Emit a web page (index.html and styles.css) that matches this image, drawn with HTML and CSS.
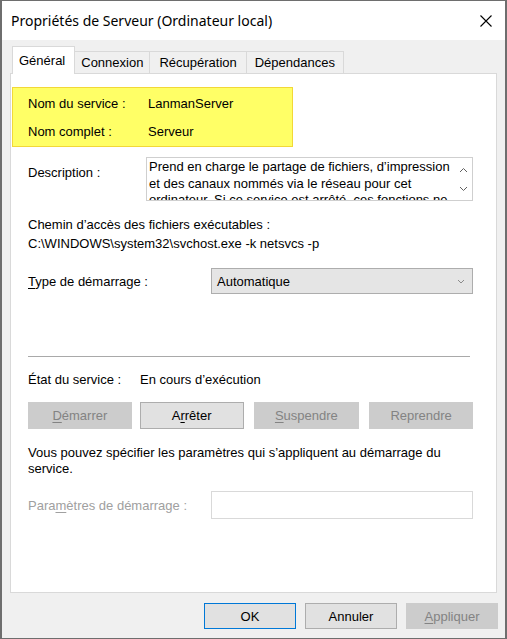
FILE: index.html
```html
<!DOCTYPE html>
<html lang="fr">
<head>
    <meta charset="UTF-8">
    <title>Propriétés de Serveur (Ordinateur local)</title>
    <link rel="stylesheet" href="styles.css">
</head>
<body>
    <div class="window">
        <div class="titlebar">
            <span class="title">Propriétés de Serveur (Ordinateur local)</span>
            <svg class="close" width="12" height="12" viewBox="0 0 12 12">
                <path d="M0.5 0.5 L11.5 11.5 M11.5 0.5 L0.5 11.5" stroke="#000" stroke-width="1.1" fill="none"/>
            </svg>
        </div>

        <div class="tabs">
            <div class="tab active">Général</div>
            <div class="tab">Connexion</div>
            <div class="tab">Récupération</div>
            <div class="tab">Dépendances</div>
        </div>

        <div class="panel">
            <!-- Names -->
            <div class="highlight">
                <div class="row">
                    <span class="label">Nom du service :</span>
                    <span>LanmanServer</span>
                </div>
                <div class="row">
                    <span class="label">Nom complet :</span>
                    <span>Serveur</span>
                </div>
            </div>

            <div class="desc-row">
                <span class="label desc-label">Description :</span>
                <div class="desc-box">
                    <div class="desc-text">Prend en charge le partage de fichiers, d’impression<br>et des canaux nommés via le réseau pour cet<br>ordinateur. Si ce service est arrêté, ces fonctions ne</div>
                    <div class="scroll">
                        <svg width="9" height="6" viewBox="0 0 9 6"><path d="M1 5 L4.5 1.5 L8 5" stroke="#606060" fill="none"/></svg>
                        <svg width="9" height="6" viewBox="0 0 9 6"><path d="M1 1 L4.5 4.5 L8 1" stroke="#606060" fill="none"/></svg>
                    </div>
                </div>
            </div>

            <div class="path">
                <div>Chemin d’accès des fichiers exécutables :</div>
                <div>C:\WINDOWS\system32\svchost.exe -k netsvcs -p</div>
            </div>

            <div class="field-row">
                <span class="label wide"><u>T</u>ype de démarrage :</span>
                <div class="select">
                    <span>Automatique</span>
                    <svg width="8" height="5" viewBox="0 0 8 5"><path d="M1 1 L4 4 L7 1" stroke="#8a8a8a" fill="none"/></svg>
                </div>
            </div>

            <div class="separator"></div>

            <div class="status">
                <span class="status-label">État du service :</span>
                <span>En cours d’exécution</span>
            </div>

            <div class="actions">
                <button class="btn disabled"><u>D</u>émarrer</button>
                <button class="btn">A<u>r</u>rêter</button>
                <button class="btn disabled"><u>S</u>uspendre</button>
                <button class="btn disabled">Reprendre</button>
            </div>

            <p class="hint">Vous pouvez spécifier les paramètres qui s’appliquent au démarrage du service.</p>

            <div class="field-row params">
                <span class="label wide muted">Para<u>m</u>ètres de démarrage :</span>
                <div class="input"></div>
            </div>
        </div>

        <div class="footer">
            <button class="btn default">OK</button>
            <button class="btn">Annuler</button>
            <button class="btn disabled"><u>A</u>ppliquer</button>
        </div>
    </div>
</body>
</html>
```

FILE: styles.css
```css
/* General */
* {
    margin: 0;
    padding: 0;
    box-sizing: border-box;
}

body {
    font-family: 'Liberation Sans', Arial, sans-serif;
    font-size: 13px;
    color: #000;
    background-color: #f0f0f0;
}

u {
    text-decoration: underline;
    text-underline-offset: 2px;
}

/* Window frame */
.window {
    width: 507px;
    height: 639px;
    background-color: #f0f0f0;
    border: 1px solid #6e6e6e;
    border-left-width: 2px;
    border-right-width: 2px;
}

.titlebar {
    height: 39px;
    background-color: #fff;
    display: flex;
    align-items: center;
    justify-content: space-between;
    padding: 0 13px 0 9px;
}

.title {
    font-family: 'Noto Sans', sans-serif;
    font-size: 14px;
    padding-bottom: 1px;
}

.close {
    display: block;
}

/* Tabs */
.tabs {
    display: flex;
    align-items: flex-end;
    height: 33px;
    margin-left: 10px;
    position: relative;
    z-index: 1;
}

.tab {
    height: 22px;
    line-height: 22px;
    padding: 0 6px;
    border: 1px solid #d9d9d9;
    border-bottom: none;
    border-left: none;
    background-color: #f0f0f0;
}

.tab:nth-child(3) {
    padding: 0 9px;
}

.tab:nth-child(4) {
    padding: 0 8px;
}

.tab.active {
    height: 28px;
    line-height: 27px;
    margin-bottom: -1px;
    padding: 0 9px 0 6px;
    background-color: #fff;
    border-left: 1px solid #d9d9d9;
}

/* Panel */
.panel {
    height: 520px;
    margin: 0 8px;
    background-color: #fff;
    border: 1px solid #d9d9d9;
    padding: 13px 23px 0 17px;
}

.highlight {
    width: 281px;
    margin-left: -16px;
    padding: 1px 0 1px 15px;
    background-color: #ffff66;
    border: 1px solid #f2d838;
}

.row {
    display: flex;
    height: 28px;
    align-items: center;
}

.label {
    width: 120px;
    flex-shrink: 0;
}

.desc-row {
    display: flex;
    margin-top: 10px;
}

.desc-label {
    padding-top: 8px;
}

.desc-box {
    display: flex;
    width: 327px;
    height: 44px;
    margin-left: -2px;
    border: 1px solid #cfcfcf;
    overflow: hidden;
}

.desc-text {
    flex: 1;
    padding: 1px 0 0 2px;
    line-height: 16.5px;
    white-space: nowrap;
    overflow: hidden;
}

.scroll {
    width: 17px;
    display: flex;
    flex-direction: column;
    justify-content: space-between;
    align-items: center;
    padding: 9px 0 8px;
}

.scroll svg {
    display: block;
}

.path {
    margin-top: 14px;
    line-height: 19px;
}

.field-row {
    display: flex;
    align-items: center;
    margin-top: 15px;
}

.wide {
    width: 183px;
}

.select {
    width: 262px;
    height: 26px;
    background-color: #e5e5e5;
    border: 1px solid #adadad;
    display: flex;
    align-items: center;
    justify-content: space-between;
    padding: 0 7px 0 5px;
}

.separator {
    margin-top: 62px;
    width: 442px;
    border-top: 1px solid #a9a9a9;
}

.status {
    display: flex;
    margin-top: 15px;
    line-height: 16px;
}

.status-label {
    width: 112px;
}

/* Buttons */
.actions {
    display: flex;
    width: 445px;
    margin-top: 14px;
}

.actions .btn {
    width: 104px;
}

.actions .btn + .btn {
    margin-left: 8px;
}

.actions .btn:nth-child(3) {
    margin-left: 10px;
    width: 106px;
}

.actions .btn:nth-child(4) {
    margin-left: 10px;
}

.btn {
    font-family: inherit;
    font-size: 13px;
    color: #000;
    height: 27px;
    background-color: #e1e1e1;
    border: 1px solid #adadad;
}

.btn.disabled {
    background-color: #cccccc;
    border-color: #cccccc;
    color: #838383;
}

.btn.default {
    border-color: #0078d7;
}

.hint {
    margin-top: 16px;
    line-height: 16px;
    width: 445px;
}

.params {
    margin-top: 14px;
}

.muted {
    color: #a0a0a0;
}

.input {
    width: 262px;
    height: 28px;
    border: 1px solid #d9d9d9;
    background-color: #fff;
}

/* Footer */
.footer {
    display: flex;
    justify-content: flex-end;
    gap: 9px;
    padding: 10px 7px 0 0;
}

.footer .btn {
    width: 92px;
    height: 26px;
}
```
